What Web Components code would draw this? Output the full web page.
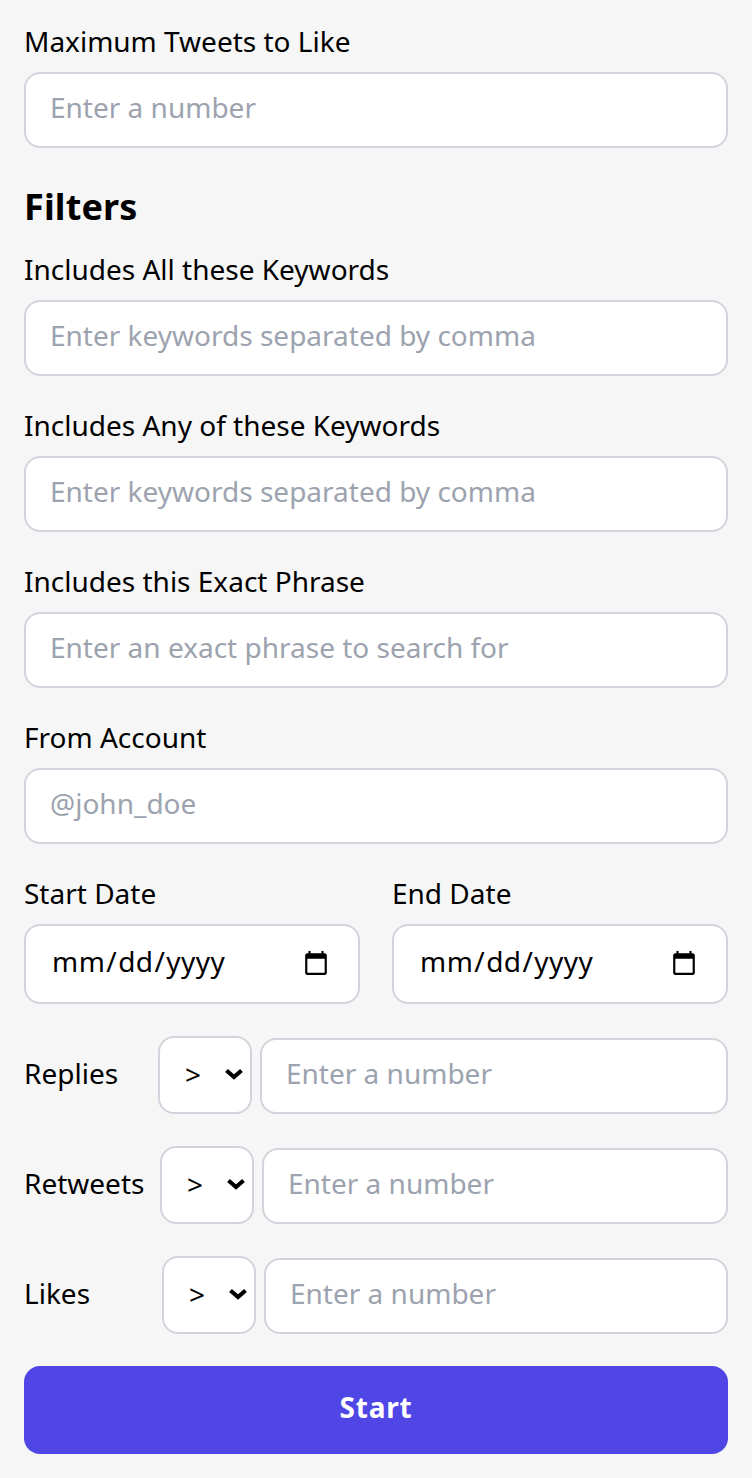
<!DOCTYPE html>
<html lang="en">
<head>
<meta charset="utf-8">
<title>Auto Like</title>
<style>
  html, body { margin: 0; background: #f6f6f6; }
  body { font-family: "Noto Sans", sans-serif; font-size: 28px; color: #000; }
</style>
</head>
<body>
<like-form>
  <text-field label="Maximum Tweets to Like" placeholder="Enter a number"></text-field>
  <filter-section>
    <text-field label="Includes All these Keywords" placeholder="Enter keywords separated by comma"></text-field>
    <text-field label="Includes Any of these Keywords" placeholder="Enter keywords separated by comma"></text-field>
    <text-field label="Includes this Exact Phrase" placeholder="Enter an exact phrase to search for"></text-field>
    <text-field label="From Account" placeholder="@john_doe"></text-field>
    <date-range></date-range>
    <compare-row label="Replies" label-width="126"></compare-row>
    <compare-row label="Retweets" label-width="128"></compare-row>
    <compare-row label="Likes" label-width="130"></compare-row>
  </filter-section>
  <start-button>Start</start-button>
</like-form>

<script>
const fieldCss = `
  input, select {
    box-sizing: border-box; font: inherit; color: #000; background: #fff;
    border: 2px solid #d1d5db; border-radius: 16px; outline: none; margin: 0;
  }
  input { width: 100%; height: 76px; padding: 0 24px 6px; }
  input::placeholder { color: #9ca3af; opacity: 1; }
  label { display: block; height: 36px; line-height: 34px; }
`;

class LikeForm extends HTMLElement {
  constructor() {
    super();
    this.attachShadow({ mode: 'open' });
    this.shadowRoot.innerHTML = `
      <style>
        :host { display: flex; flex-direction: column; gap: 32px; padding: 24px; }
      </style>
      <slot></slot>
    `;
  }
}

class FilterSection extends HTMLElement {
  constructor() {
    super();
    this.attachShadow({ mode: 'open' });
    this.shadowRoot.innerHTML = `
      <style>
        :host { display: flex; flex-direction: column; gap: 32px; }
        h2 { margin: 0 0 -14px; font-size: 36px; line-height: 54px; font-weight: 700; letter-spacing: .15px; }
      </style>
      <h2>Filters</h2>
      <slot></slot>
    `;
  }
}

class TextField extends HTMLElement {
  constructor() {
    super();
    this.attachShadow({ mode: 'open' });
  }
  connectedCallback() {
    this.shadowRoot.innerHTML = `
      <style>
        :host { display: flex; flex-direction: column; gap: 12px; }
        ${fieldCss}
      </style>
      <label for="f">${this.getAttribute('label')}</label>
      <input id="f" type="text" placeholder="${this.getAttribute('placeholder')}">
    `;
  }
}

class DateRange extends HTMLElement {
  constructor() {
    super();
    this.attachShadow({ mode: 'open' });
    this.shadowRoot.innerHTML = `
      <style>
        :host { display: grid; grid-template-columns: 1fr 1fr; gap: 32px; }
        div { display: flex; flex-direction: column; gap: 12px; min-width: 0; }
        ${fieldCss}
        input { height: 80px; padding-left: 25px; letter-spacing: .45px; }
        input::-webkit-calendar-picker-indicator { transform: translate(-2px, 3px); }
      </style>
      <div><label for="s">Start Date</label><input id="s" type="date"></div>
      <div><label for="e">End Date</label><input id="e" type="date"></div>
    `;
  }
}

class CompareRow extends HTMLElement {
  constructor() {
    super();
    this.attachShadow({ mode: 'open' });
  }
  connectedCallback() {
    this.shadowRoot.innerHTML = `
      <style>
        :host { display: flex; align-items: flex-end; gap: 8px; }
        ${fieldCss}
        label { align-self: center; flex: none; margin-bottom: 2px; width: ${this.getAttribute('label-width')}px; }
        .pick { position: relative; flex: none; width: 94px; height: 78px; }
        select { appearance: none; width: 100%; height: 100%; padding: 0 0 2px 25px; }
        svg { position: absolute; right: 9px; top: 32px; width: 18px; height: 12px; pointer-events: none; }
        input { flex: 1; min-width: 0; }
      </style>
      <label for="n">${this.getAttribute('label')}</label>
      <div class="pick">
        <select aria-label="Comparison"><option>&gt;</option><option>&lt;</option><option>=</option></select>
        <svg viewBox="0 0 18 12"><path d="M1.5 2.5L9 9l7.5-6.5" fill="none" stroke="#000" stroke-width="4.2"/></svg>
      </div>
      <input id="n" type="number" placeholder="Enter a number">
    `;
  }
}

class StartButton extends HTMLElement {
  constructor() {
    super();
    this.attachShadow({ mode: 'open' });
    this.shadowRoot.innerHTML = `
      <style>
        :host { display: block; }
        button {
          display: block; width: 100%; height: 88px; border: 0; border-radius: 16px; padding: 0 0 6px;
          background: #4f46e5; color: #fff; font: 700 28px "Noto Sans", sans-serif; letter-spacing: .8px;
        }
      </style>
      <button type="button"><slot></slot></button>
    `;
  }
}

customElements.define('like-form', LikeForm);
customElements.define('filter-section', FilterSection);
customElements.define('text-field', TextField);
customElements.define('date-range', DateRange);
customElements.define('compare-row', CompareRow);
customElements.define('start-button', StartButton);
</script>
</body>
</html>
